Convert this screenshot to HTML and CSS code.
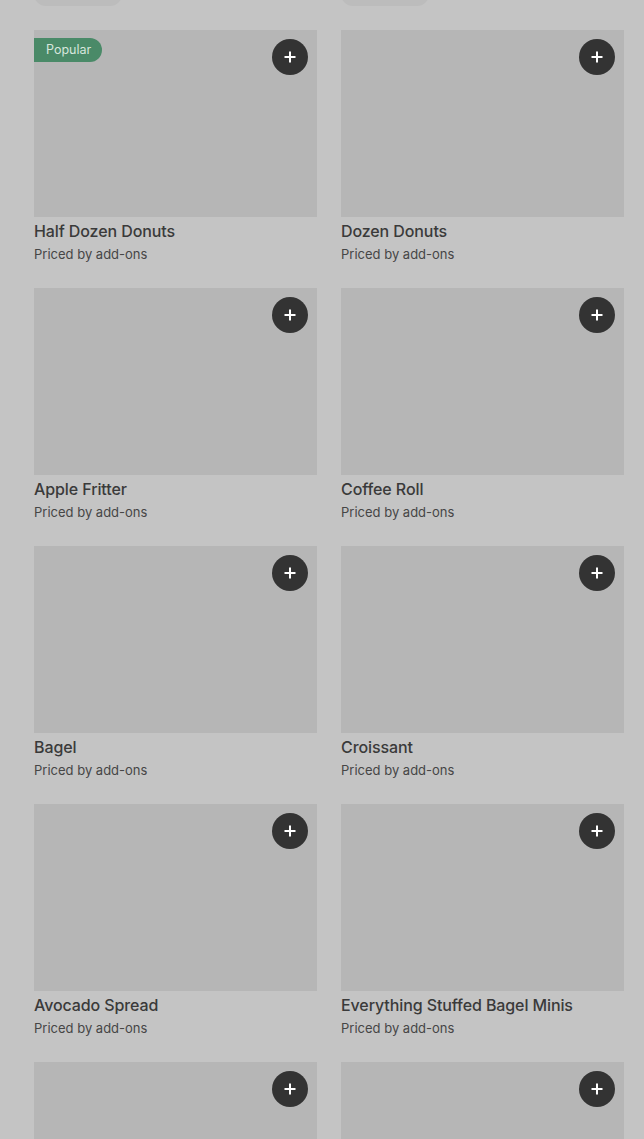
FILE: index.html
```html
<!DOCTYPE html>
<html>
<head>
<meta charset="utf-8">
<link rel="stylesheet" href="styles.css">
</head>
<body>
<div class="page">
  <div class="grid">
    <div class="pill-row"><div class="pill"></div></div>
    <div class="pill-row"><div class="pill"></div></div>

    <div class="card">
      <div class="thumb"><span class="badge">Popular</span><button class="add"><svg viewBox="0 0 16 16" width="16" height="16"><path d="M8 2.5v11M2.5 8h11" stroke="#fff" stroke-width="2"/></svg></button></div>
      <div class="title">Half Dozen Donuts</div>
      <div class="sub">Priced by add-ons</div>
    </div>
    <div class="card">
      <div class="thumb"><button class="add"><svg viewBox="0 0 16 16" width="16" height="16"><path d="M8 2.5v11M2.5 8h11" stroke="#fff" stroke-width="2"/></svg></button></div>
      <div class="title">Dozen Donuts</div>
      <div class="sub">Priced by add-ons</div>
    </div>

    <div class="card">
      <div class="thumb"><button class="add"><svg viewBox="0 0 16 16" width="16" height="16"><path d="M8 2.5v11M2.5 8h11" stroke="#fff" stroke-width="2"/></svg></button></div>
      <div class="title">Apple Fritter</div>
      <div class="sub">Priced by add-ons</div>
    </div>
    <div class="card">
      <div class="thumb"><button class="add"><svg viewBox="0 0 16 16" width="16" height="16"><path d="M8 2.5v11M2.5 8h11" stroke="#fff" stroke-width="2"/></svg></button></div>
      <div class="title">Coffee Roll</div>
      <div class="sub">Priced by add-ons</div>
    </div>

    <div class="card">
      <div class="thumb"><button class="add"><svg viewBox="0 0 16 16" width="16" height="16"><path d="M8 2.5v11M2.5 8h11" stroke="#fff" stroke-width="2"/></svg></button></div>
      <div class="title">Bagel</div>
      <div class="sub">Priced by add-ons</div>
    </div>
    <div class="card">
      <div class="thumb"><button class="add"><svg viewBox="0 0 16 16" width="16" height="16"><path d="M8 2.5v11M2.5 8h11" stroke="#fff" stroke-width="2"/></svg></button></div>
      <div class="title">Croissant</div>
      <div class="sub">Priced by add-ons</div>
    </div>

    <div class="card">
      <div class="thumb"><button class="add"><svg viewBox="0 0 16 16" width="16" height="16"><path d="M8 2.5v11M2.5 8h11" stroke="#fff" stroke-width="2"/></svg></button></div>
      <div class="title">Avocado Spread</div>
      <div class="sub">Priced by add-ons</div>
    </div>
    <div class="card">
      <div class="thumb"><button class="add"><svg viewBox="0 0 16 16" width="16" height="16"><path d="M8 2.5v11M2.5 8h11" stroke="#fff" stroke-width="2"/></svg></button></div>
      <div class="title">Everything Stuffed Bagel Minis</div>
      <div class="sub">Priced by add-ons</div>
    </div>

    <div class="card">
      <div class="thumb"><button class="add"><svg viewBox="0 0 16 16" width="16" height="16"><path d="M8 2.5v11M2.5 8h11" stroke="#fff" stroke-width="2"/></svg></button></div>
    </div>
    <div class="card">
      <div class="thumb"><button class="add"><svg viewBox="0 0 16 16" width="16" height="16"><path d="M8 2.5v11M2.5 8h11" stroke="#fff" stroke-width="2"/></svg></button></div>
    </div>
  </div>
</div>
</body>
</html>
```

FILE: styles.css
```css
html, body {
  margin: 0;
  padding: 0;
  background: #c4c4c4;
  overflow: hidden;
  height: 1139px;
}
body {
  font-family: Inter, "Noto Sans", sans-serif;
  color: #3a3a3a;
}
.page {
  padding: 0 20px 0 34px;
}
.grid {
  display: grid;
  grid-template-columns: 283px 283px;
  column-gap: 24px;
  row-gap: 24px;
  margin-top: -18px;
}
.pill-row {
  height: 24px;
}
.pill {
  width: 88px;
  height: 24px;
  border-radius: 12px;
  background: #bcbcbc;
}
.card {
  display: flex;
  flex-direction: column;
}
.thumb {
  position: relative;
  height: 187px;
  background: #b6b6b6;
}
.badge {
  position: absolute;
  left: 0;
  top: 8px;
  height: 24px;
  line-height: 24px;
  padding: 0 11px 0 12px;
  background: #4a8a68;
  color: #d7e6dd;
  font-size: 12.5px;
  border-radius: 0 12px 12px 0;
}
.add {
  position: absolute;
  top: 9px;
  right: 9px;
  width: 36px;
  height: 36px;
  border: none;
  border-radius: 50%;
  background: #333333;
  padding: 0;
  display: flex;
  align-items: center;
  justify-content: center;
}
.add svg {
  display: block;
}
.title {
  margin-top: 4px;
  font-size: 16px;
  font-weight: 500;
  line-height: 20px;
  color: #3a3a3a;
  letter-spacing: -0.1px;
}
.sub {
  margin-top: 3px;
  font-size: 13px;
  line-height: 20px;
  color: #464646;
}
```
